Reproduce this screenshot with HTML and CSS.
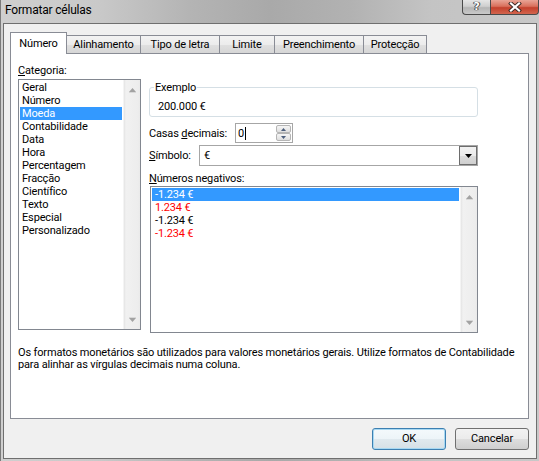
FILE: index.html
```html
<!DOCTYPE html>
<html lang="pt">
<head>
<meta charset="utf-8">
<title>Formatar células</title>
<link rel="stylesheet" href="styles.css">
</head>
<body>
<div class="window">
  <div class="titlebar">
    <span class="title">Formatar células</span>
    <div class="caption-buttons">
      <div class="cbtn help"><span>?</span></div>
      <div class="cbtn close">
        <svg width="14" height="10" viewBox="0 0 14 10">
          <path d="M3 1.5 L11 8.5 M11 1.5 L3 8.5" stroke="#3b2a26" stroke-width="4" stroke-linecap="square" fill="none"/>
          <path d="M3 1.5 L11 8.5 M11 1.5 L3 8.5" stroke="#ffffff" stroke-width="2.2" stroke-linecap="square" fill="none"/>
        </svg>
      </div>
    </div>
  </div>
  <div class="client">
    <div class="tabs">
      <div class="tab active t1">Número</div>
      <div class="tab t2">Alinhamento</div>
      <div class="tab t3">Tipo de letra</div>
      <div class="tab t4">Limite</div>
      <div class="tab t5">Preenchimento</div>
      <div class="tab t6">Protecção</div>
    </div>
    <div class="panel">
      <div class="cols">
        <div class="left">
          <div class="label"><u>C</u>ategoria:</div>
          <div class="listbox cat">
            <ul class="items">
              <li>Geral</li>
              <li>Número</li>
              <li class="sel">Moeda</li>
              <li>Contabilidade</li>
              <li>Data</li>
              <li>Hora</li>
              <li>Percentagem</li>
              <li>Fracção</li>
              <li>Científico</li>
              <li>Texto</li>
              <li>Especial</li>
              <li>Personalizado</li>
            </ul>
            <div class="vscroll">
              <svg class="arr" width="9" height="6" viewBox="0 0 9 6"><path d="M1 5 L4.5 1 L8 5 Z" fill="#a2a2a2"/><path d="M1 5.5 H8" stroke="#d8d8d8" stroke-width="1"/></svg>
              <svg class="arr" width="9" height="6" viewBox="0 0 9 6"><path d="M1 1 L4.5 5 L8 1 Z" fill="#a2a2a2"/><path d="M1 0.5 H8" stroke="#d8d8d8" stroke-width="1"/></svg>
            </div>
          </div>
        </div>
        <div class="right">
          <fieldset class="sample">
            <legend>Exemplo</legend>
            <div class="sample-val">200.000 €</div>
          </fieldset>
          <div class="row row-spin">
            <span class="row-label w-dec">Casas <u>d</u>ecimais:</span>
            <div class="spin">
              <span class="spin-val">0</span><span class="caret"></span>
              <div class="spin-btns">
                <span class="sb"><svg width="5" height="3" viewBox="0 0 5 3"><path d="M0 3 L2.5 0 L5 3 Z" fill="#4d5f7d"/></svg></span>
                <span class="sb"><svg width="5" height="3" viewBox="0 0 5 3"><path d="M0 0 L2.5 3 L5 0 Z" fill="#4d5f7d"/></svg></span>
              </div>
            </div>
          </div>
          <div class="row row-combo">
            <span class="row-label w-sym"><u>S</u>ímbolo:</span>
            <div class="combo">
              <span class="combo-val">€</span>
              <div class="drop"><svg width="7" height="4" viewBox="0 0 7 4"><path d="M0 0 H7 L3.5 4 Z" fill="#000"/></svg></div>
            </div>
          </div>
          <div class="label neg-label"><u>N</u>úmeros negativos:</div>
          <div class="listbox neg">
            <ul class="items">
              <li class="sel">-1.234 €</li>
              <li class="red">1.234 €</li>
              <li>-1.234 €</li>
              <li class="red">-1.234 €</li>
            </ul>
            <div class="vscroll">
              <svg class="arr" width="9" height="6" viewBox="0 0 9 6"><path d="M1 5 L4.5 1 L8 5 Z" fill="#a2a2a2"/><path d="M1 5.5 H8" stroke="#d8d8d8" stroke-width="1"/></svg>
              <svg class="arr" width="9" height="6" viewBox="0 0 9 6"><path d="M1 1 L4.5 5 L8 1 Z" fill="#a2a2a2"/><path d="M1 0.5 H8" stroke="#d8d8d8" stroke-width="1"/></svg>
            </div>
          </div>
        </div>
      </div>
      <p class="desc">Os formatos monetários são utilizados para valores monetários gerais. Utilize formatos de Contabilidade<br>para alinhar as vírgulas decimais numa coluna.</p>
    </div>
    <div class="footer">
      <button class="btn default">OK</button>
      <button class="btn">Cancelar</button>
    </div>
  </div>
</div>
</body>
</html>
```

FILE: styles.css
```css
* { box-sizing: border-box; }
html, body { margin: 0; padding: 0; }
body {
  width: 539px;
  height: 461px;
  overflow: hidden;
  font-family: Roboto, "Noto Sans", sans-serif;
  font-size: 11px;
  letter-spacing: -0.15px;
  color: #000;
  background: #c4c4c4;
}
u { text-decoration: underline; text-underline-offset: 1px; }

.window {
  width: 539px;
  height: 461px;
  display: flex;
  flex-direction: column;
  padding: 0 2px 2px 2px;
  border-left: 1px solid #7a7a7a;
  background: linear-gradient(to right, #cfcfcf 0%, #c9c9c9 18%, #b4b4b4 35%, #a9a9a9 50%, #b2b2b2 65%, #c4c4c4 80%, #c8c8c8 100%);
}

/* title bar */
.titlebar {
  height: 23px;
  display: flex;
  align-items: flex-start;
  flex: none;
}
.title {
  padding: 3px 0 0 2px;
  font-size: 12px;
  line-height: 14px;
  letter-spacing: -0.2px;
  color: #000;
}
.caption-buttons {
  margin-left: auto;
  margin-right: -2px;
  display: flex;
}
.cbtn {
  height: 15px;
  border: 1px solid #4a4a4a;
  border-top: none;
  display: flex;
  align-items: center;
  justify-content: center;
}
.help {
  width: 28px;
  border-radius: 0 0 0 4px;
  border-right: none;
  background: linear-gradient(#e6e6e6 0%, #cfcfcf 45%, #b5b5b5 55%, #c9c9c9 100%);
}
.help span {
  font-family: "DejaVu Sans", sans-serif;
  font-weight: bold;
  font-size: 11px;
  line-height: 12px;
  color: #fff;
  text-shadow: 0 0 1px #333, 0 0 1px #333, 1px 0 0 #555, -1px 0 0 #555;
}
.close {
  width: 49px;
  border-radius: 0 0 4px 0;
  background: linear-gradient(#e9a596 0%, #d9705c 45%, #c4412c 55%, #d2654e 100%);
}

/* client */
.client {
  flex: 1;
  border: 1px solid #6f6f6f;
  background: #f0f0f0;
  display: flex;
  flex-direction: column;
  padding: 8px 7px 8px 6px;
}

.tabs {
  height: 21px;
  display: flex;
  align-items: flex-end;
  flex: none;
}
.tab {
  height: 18px;
  margin-left: -1px;
  border: 1px solid #898c95;
  border-bottom: none;
  background: linear-gradient(#f3f3f3 0%, #ececec 50%, #e0e0e0 51%, #d6d6d6 100%);
  text-align: center;
  line-height: 18px;
  white-space: nowrap;
}
.tab.active {
  height: 22px;
  margin-left: 0;
  margin-bottom: -1px;
  background: #fff;
  position: relative;
  z-index: 1;
  line-height: 21px;
}
.t1 { width: 57px; }
.t2 { width: 75px; }
.t3 { width: 80px; }
.t4 { width: 56px; }
.t5 { width: 90px; }
.t6 { width: 64px; }

.panel {
  height: 366px;
  flex: none;
  border: 1px solid #898c95;
  background: #fff;
  padding: 10px 7px 0 7px;
}
.cols { display: flex; }
.left { width: 123px; flex: none; }
.right { width: 329px; margin-left: 8px; flex: none; }

.label {
  height: 13px;
  line-height: 13px;
  white-space: nowrap;
}

.listbox {
  display: flex;
  border: 1px solid #828790;
  background: #fff;
}
.cat { height: 251px; margin-top: 2px; }
.neg { height: 147px; margin-top: 1px; margin-left: 1px; width: 328px; }
.items {
  list-style: none;
  margin: 0;
  padding: 1px;
  flex: 1;
}
.items li {
  height: 13px;
  line-height: 13px;
  padding-left: 2px;
  white-space: nowrap;
}
.neg .items li { padding-left: 3px; }
.items li.sel { background: #3399ff; color: #fff; }
.items li.red { color: #ff0000; }

.vscroll {
  width: 17px;
  flex: none;
  display: flex;
  flex-direction: column;
  justify-content: space-between;
  align-items: center;
  padding: 7px 0 6px 0;
  background: linear-gradient(to right, #e4e4e4 0px, #f1f1f1 2px, #ededed 14px, #e8e8e8 17px);
  border-left: 1px solid #f4f4f4;
}
.arr { display: block; }

.sample {
  margin: 17px 0 0 0;
  padding: 6px 0 2px 2px;
  border: 1px solid #d5dfe5;
  border-radius: 3px;
  height: 36px;
}
.sample legend {
  padding: 0 1px;
  margin-left: 2px;
  line-height: 13px;
  height: 13px;
}
.sample-val { line-height: 13px; height: 13px; padding-left: 6px; }

.row {
  display: flex;
  align-items: center;
}
.row-label { white-space: nowrap; line-height: 13px; }
.w-dec { width: 86px; }
.w-sym { width: 50px; }
.row-spin { margin-top: 6px; height: 20px; }
.row-combo { margin-top: 2px; height: 21px; }

.spin {
  width: 58px;
  height: 20px;
  border: 1px solid #a6a6a6;
  display: flex;
  align-items: center;
  padding-left: 2px;
  background: #fff;
}
.spin-val { line-height: 13px; }
.caret {
  width: 1px;
  height: 13px;
  background: #000;
  margin-left: 1px;
}
.spin-btns {
  margin-left: auto;
  margin-right: 1px;
  width: 15px;
  height: 16px;
  display: flex;
  flex-direction: column;
}
.sb {
  height: 8px;
  border: 1px solid #b5b5b5;
  border-radius: 2px;
  background: linear-gradient(#f6f6f6, #dedede);
  display: flex;
  align-items: center;
  justify-content: center;
}
.sb svg { display: block; }

.combo {
  width: 279px;
  height: 21px;
  border: 1px solid #a6a6a6;
  display: flex;
  align-items: center;
  padding-left: 4px;
  background: #fff;
}
.combo-val { line-height: 13px; }
.drop {
  margin-left: auto;
  width: 18px;
  height: 19px;
  border: 1px solid #6d6d6d;
  background: linear-gradient(#f2f2f2 0%, #ebebeb 50%, #dcdcdc 51%, #cfcfcf 100%);
  display: flex;
  align-items: center;
  justify-content: center;
}
.drop svg { display: block; }

.neg-label { margin-top: 6px; }

.desc {
  margin: 14px 0 0 0;
  line-height: 12px;
  white-space: nowrap;
}

.footer {
  display: flex;
  justify-content: flex-end;
  gap: 9px;
  margin-top: 9px;
  flex: none;
}
.btn {
  width: 74px;
  height: 22px;
  border: 1px solid #707070;
  border-radius: 3px;
  background: linear-gradient(#f2f2f2 0%, #ebebeb 50%, #dddddd 51%, #cfcfcf 100%);
  font-family: Roboto, "Noto Sans", sans-serif;
  font-size: 11px;
  letter-spacing: -0.15px;
  color: #000;
  padding: 0;
  line-height: 18px;
}
.btn.default {
  border-color: #3c7fb1;
  box-shadow: inset 0 0 0 1px #a7d8f2;
  background: linear-gradient(#f4f9fc 0%, #edf4f8 50%, #e0e9ee 51%, #d6e0e6 100%);
}
```
